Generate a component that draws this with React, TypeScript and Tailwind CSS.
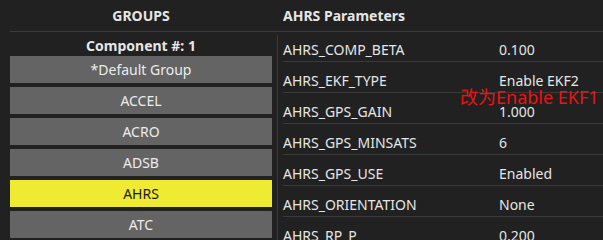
const groups = ['*Default Group', 'ACCEL', 'ACRO', 'ADSB', 'AHRS', 'ATC'];

const params: [string, string][] = [
  ['AHRS_COMP_BETA', '0.100'],
  ['AHRS_EKF_TYPE', 'Enable EKF2'],
  ['AHRS_GPS_GAIN', '1.000'],
  ['AHRS_GPS_MINSATS', '6'],
  ['AHRS_GPS_USE', 'Enabled'],
  ['AHRS_ORIENTATION', 'None'],
  ['AHRS_RP_P', '0.200'],
];

export default function App() {
  return (
    <div
      className="relative w-[603px] h-[240px] overflow-hidden bg-[#212121] text-[#e6e6e6] text-[14px]"
      style={{ fontFamily: '"Noto Sans", "Noto Sans CJK SC", sans-serif' }}
    >
      {/* header */}
      <div className="flex h-[32px] ml-[10px] border-b border-[#3a3a3a]">
        <div className="w-[262px] flex items-center justify-center font-bold">GROUPS</div>
        <div className="pl-[11px] flex items-center font-bold">AHRS Parameters</div>
      </div>

      <div className="flex">
        {/* groups */}
        <div className="w-[262px] ml-[10px] flex flex-col">
          <div className="h-[24px] flex items-center justify-center font-bold pt-[2px]">Component #: 1</div>
          <div className="flex flex-col gap-[4px]">
            {groups.map((g) => (
              <div
                key={g}
                className={
                  g === 'AHRS'
                    ? 'h-[27px] flex items-center justify-center bg-[#efeb33] text-[#1a1a1a]'
                    : 'h-[27px] flex items-center justify-center bg-[#646464] text-[#ececec]'
                }
              >
                {g}
              </div>
            ))}
          </div>
        </div>

        {/* divider */}
        <div className="ml-[5px] mt-[3px] w-px h-[210px] bg-[#3a3a3a]" />

        {/* params */}
        <div className="flex-1 ml-[5px] -mt-px">
          {params.map(([name, value]) => (
            <div key={name} className="h-[31px] flex items-start pt-[8px] border-b border-[#3a3a3a]">
              <div className="w-[216px]">{name}</div>
              <div>{value}</div>
            </div>
          ))}
        </div>
      </div>

      {/* annotation */}
      <div className="absolute left-[460px] top-[86px] text-[18px] leading-[22px] text-[#ee1111]">
        改为Enable EKF1
      </div>
    </div>
  );
}
